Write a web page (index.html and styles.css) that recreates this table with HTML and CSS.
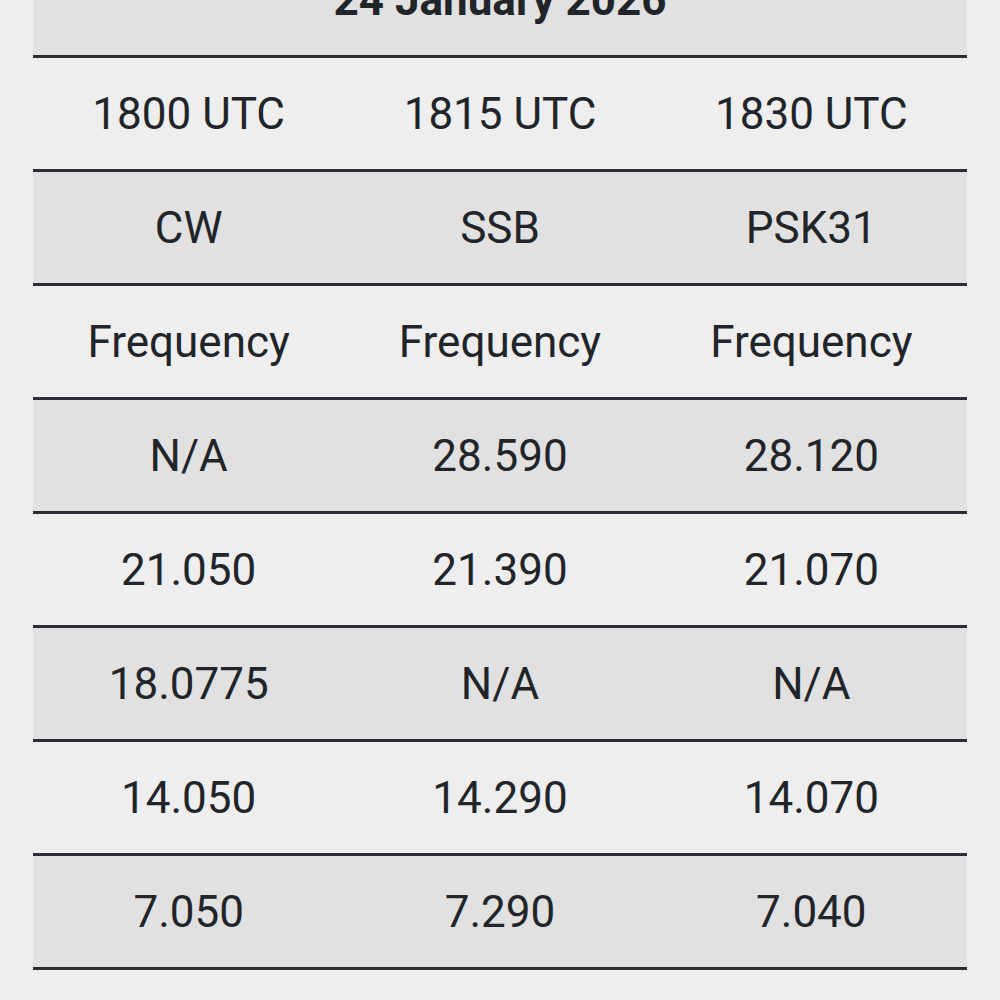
FILE: index.html
```html
<!DOCTYPE html>
<html>
<head>
<meta charset="utf-8">
<link rel="stylesheet" href="styles.css">
</head>
<body>
<div class="page">
<table class="sched">
  <tr class="alt"><th colspan="3" class="date">24 January 2026</th></tr>
  <tr><td>1800 UTC</td><td>1815 UTC</td><td>1830 UTC</td></tr>
  <tr class="alt"><td>CW</td><td>SSB</td><td>PSK31</td></tr>
  <tr><td>Frequency</td><td>Frequency</td><td>Frequency</td></tr>
  <tr class="alt"><td>N/A</td><td>28.590</td><td>28.120</td></tr>
  <tr><td>21.050</td><td>21.390</td><td>21.070</td></tr>
  <tr class="alt"><td>18.0775</td><td>N/A</td><td>N/A</td></tr>
  <tr><td>14.050</td><td>14.290</td><td>14.070</td></tr>
  <tr class="alt"><td>7.050</td><td>7.290</td><td>7.040</td></tr>
</table>
</div>
</body>
</html>
```
FILE: styles.css
```css
html, body {
  margin: 0;
  padding: 0;
  background: #eeeeee;
}
.page {
  padding: 0 33px;
  margin-top: -56px;
}
.sched {
  width: 100%;
  border-collapse: collapse;
  table-layout: fixed;
  font-family: Roboto, "Noto Sans", sans-serif;
  font-size: 44px;
  color: #212529;
}
.sched tr {
  border-bottom: 3px solid #2b2f35;
}
.sched td, .sched th {
  height: 111px;
  padding: 0;
  text-align: center;
  vertical-align: middle;
  font-weight: 400;
}
.sched .date {
  font-weight: 700;
}
.sched tr.alt {
  background: #e1e1e1;
}
```
